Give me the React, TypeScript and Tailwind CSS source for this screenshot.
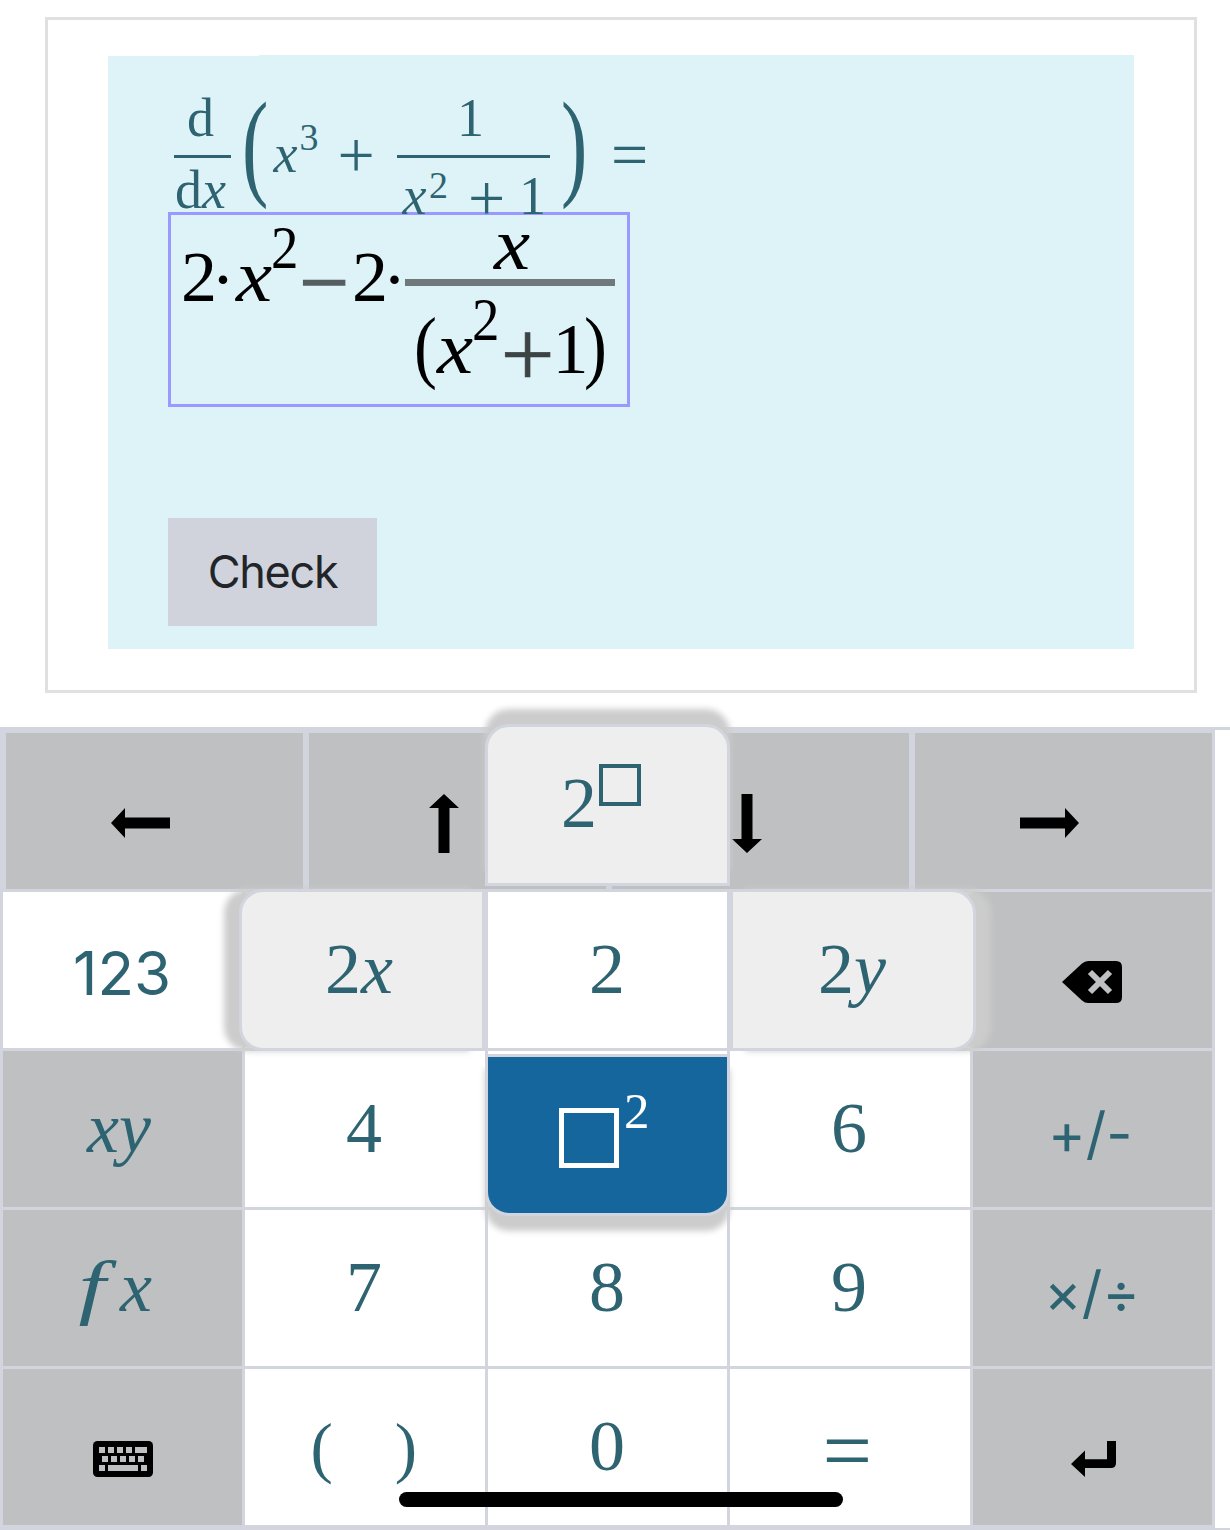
import type { ReactNode } from "react";

/** One math symbol; the line box is exactly one em high. */
function G({ c = "", children }: { c?: string; children: ReactNode }) {
  return <span className={`block shrink-0 whitespace-pre leading-none ${c}`}>{children}</span>;
}

function Question() {
  return (
    <div className="relative z-10 flex h-[122px] items-start text-[#2e6472]">
      <div className="w-[57px] shrink-0">
        <G c="pl-[13px] pt-[1px] text-[54px]">d</G>
        <div className="mt-[10px] h-[3px] bg-[#2e6472]" />
        <div className="mt-[5px] flex pl-[1px] text-[54px]">
          <G>d</G>
          <G c="italic">x</G>
        </div>
      </div>
      <G c="-mt-[4px] ml-[11px] w-[31.5px] origin-left scale-x-[0.67] text-[118px]">(</G>
      <G c="mt-[37px] w-[26px] text-[54px] italic">x</G>
      <G c="mt-[28px] w-[38px] text-[38px]">3</G>
      <G c="mt-[32px] w-[59px] text-[66px]">+</G>
      <div className="w-[153px] shrink-0">
        <G c="pl-[60.500px] pt-[1px] text-[54px]">1</G>
        <div className="mt-[10px] h-[3px] bg-[#2e6472]" />
        <div className="flex h-[60px] items-start pl-[6px]">
          <G c="mt-[11px] w-[26.500px] text-[54px] italic">x</G>
          <G c="mt-[8px] w-[39px] text-[38px]">2</G>
          <G c="mt-[7px] w-[51px] text-[66px]">+</G>
          <G c="mt-[11px] text-[54px]">1</G>
        </div>
      </div>
      <G c="-mt-[4px] ml-[11px] w-[50.500px] origin-left scale-x-[0.67] text-[118px]">)</G>
      <G c="mt-[32px] text-[66px]">=</G>
    </div>
  );
}

function Answer() {
  return (
    <div className="flex h-[195px] w-[462px] items-start border-[3px] border-[#9999ff] pl-[10px] text-black">
      <G c="mt-[26px] w-[30px] text-[72px]">2</G>
      <G c="mt-[29px] w-[25px] text-[72px]">·</G>
      <G c="mt-[24px] w-[35px] origin-left scale-x-110 text-[74px] italic">x</G>
      <G c="mt-[2px] w-[28.5px] origin-left scale-x-90 text-[61px]">2</G>
      <G c="mt-[24px] w-[52.500px] text-[88px] text-[#555e61] [-webkit-text-stroke:1.5px_#555e61]">−</G>
      <G c="mt-[26px] w-[30.5px] text-[72px]">2</G>
      <G c="mt-[29px] w-[22.5px] text-[72px]">·</G>
      <div className="w-[210px] shrink-0">
        <G c="-mt-[8px] h-[72px] pl-[89px] text-[74px] italic">
          <span className="inline-block origin-left scale-x-110">x</span>
        </G>
        <div className="h-[7px] bg-[#6f797c]" />
        <div className="flex items-start pl-[8.5px]">
          <G c="mt-[20px] w-[23.5px] origin-left scale-x-85 text-[81px]">(</G>
          <G c="mt-[25px] w-[35px] origin-left scale-x-110 text-[74px] italic">x</G>
          <G c="mt-[3px] w-[28.5px] origin-left scale-x-90 text-[61px]">2</G>
          <G c="mt-[20px] w-[52px] text-[96px] text-[#3c4345] [-webkit-text-stroke:0.7px_#3c4345]">+</G>
          <G c="mt-[27px] w-[31px] text-[72px]">1</G>
          <G c="mt-[20px] origin-left scale-x-85 text-[81px]">)</G>
        </div>
      </div>
    </div>
  );
}

function Arrow({ c = "" }: { c?: string }) {
  return (
    <svg className={`size-[60px] ${c}`} viewBox="0 0 60 60">
      <path d="M0 30 14 15V24.5H59V35.5H14V45Z" />
    </svg>
  );
}

function Backspace() {
  return (
    <svg className="ml-[89px] mt-[69px] h-[42px] w-[60px]" viewBox="0 0 60 42">
      <path d="M0 21 20 2.5Q23 0 26 0H54Q60 0 60 6V36Q60 42 54 42H26Q23 42 20 39.500Z" />
      <path d="M28 11 48 31M48 11 28 31" stroke="#bfc0c2" strokeWidth="6" />
    </svg>
  );
}

function KeyboardIcon() {
  return (
    <svg className="ml-[90px] mt-[72px] h-[36px] w-[60px]" viewBox="0 0 60 36">
      <rect width="60" height="36" rx="4.5" />
      <path
        fill="#bfc0c2"
        d="M6 6h6v6H6zM15 6h6v6h-6zM24 6h6v6h-6zM33 6h6v6h-6zM42 6h12v6H42zM9 15h6v6H9zM18 15h6v6h-6zM27 15h6v6h-6zM36 15h6v6h-6zM45 15h6v6h-6zM6 24h6v6H6zM15 24h30v6H15zM48 24h6v6h-6z"
      />
    </svg>
  );
}

function EnterIcon() {
  return (
    <svg className="ml-[98px] mt-[72px] h-[36px] w-[45px]" viewBox="0 0 45 36">
      <path d="M0 23 14 9.500V18.300H36V0H45V22Q45 27 40 27H14V36Z" />
    </svg>
  );
}

function Key({ c = "bg-white", children }: { c?: string; children: ReactNode }) {
  return <div className={`relative flex h-[156px] items-start ${c}`}>{children}</div>;
}

const gray = "bg-[#bfc0c2]";

export default function App() {
  return (
    <div className="relative h-[1530px] w-[1230px] overflow-hidden bg-white font-['Liberation_Serif',serif]">
      <div className="h-[727px] pl-[45px] pt-[17px]">
        <div className="h-[676px] w-[1152px] border-[3px] border-[#e0e0e0] pl-[60px] pt-[35px]">
          <div className="h-[594px] w-[1026px] bg-[#def3f8]">
            <div className="h-px w-[151px] bg-white" />
            <div className="pl-[60px] pt-[34px]">
              <div className="pl-[6px]">
                <Question />
              </div>
              <Answer />
              <button className="mt-[111px] flex h-[108px] w-[209px] items-center justify-center bg-[#d0d3db] font-[Inter,sans-serif] text-[45px] tracking-[-1.3px] text-[#212529]">
                Check
              </button>
            </div>
          </div>
        </div>
      </div>

      <div className="h-[803px] border-b-2 border-t-[3px] border-[#d2d5dd]">
        <div className="h-[798px] w-[1215px] bg-[#d2d5dd] pl-[3px] text-[72px] text-[#2e6472]">
          <div className="mb-[3px] flex gap-[6px] pl-[3px] pt-[3px] text-black">
            <div className={`h-[156px] w-[297px] pl-[105px] pt-[60px] ${gray}`}>
              <Arrow />
            </div>
            <div className={`h-[156px] w-[297px] pl-[105px] pt-[60.500px] ${gray}`}>
              <Arrow c="rotate-90" />
            </div>
            <div className={`h-[156px] w-[297px] pl-[105px] pt-[59.500px] ${gray}`}>
              <Arrow c="-rotate-90" />
            </div>
            <div className={`h-[156px] w-[297px] pl-[104px] pt-[60px] ${gray}`}>
              <Arrow c="rotate-180" />
            </div>
          </div>
          <div className="grid grid-cols-[239px_240px_239px_240px_239px] gap-[3px]">
            <Key>
              <G c="ml-[70px] mt-[51px] font-[Inter,sans-serif] text-[60px]">123</G>
            </Key>
            <Key>{null}</Key>
            <Key c="bg-white z-10">
              <G c="ml-[101px] mt-[41px]">2</G>
              <div className="absolute -left-[3px] -top-[168px] flex h-[162px] w-[245px] items-start rounded-t-[24px] border-[3px] border-[#d2d5dd] bg-[#eeeeee] shadow-[0_-15px_6px_#cccccc]">
                <G c="ml-[73px] mt-[40px]">2</G>
                <div className="ml-[2px] mt-[37px] size-[42px] border-4 border-[#2e6472]" />
              </div>
              <div className="absolute -left-[249px] -top-[3px] flex h-[162px] w-[246px] items-start rounded-l-[24px] border-[3px] border-[#d2d5dd] bg-[#eeeeee] shadow-[-15px_0_6px_#cccccc]">
                <G c="ml-[83px] mt-[41px]">
                  2<i>x</i>
                </G>
              </div>
              <div className="absolute -top-[3px] left-[242px] flex h-[162px] w-[246px] items-start rounded-r-[24px] border-[3px] border-[#d2d5dd] bg-[#eeeeee] shadow-[15px_0_6px_#cccccc]">
                <G c="ml-[85px] mt-[41px]">
                  2<i>y</i>
                </G>
              </div>
              <div className="absolute -left-[3px] top-[162px] flex h-[162px] w-[245px] items-start rounded-b-[24px] border-[3px] border-[#d2d5dd] bg-[#15669c] text-white shadow-[0_15px_6px_#cccccc]">
                <div className="ml-[71px] mt-[51px] size-[60px] border-[5px] border-white" />
                <G c="ml-[5px] mt-[29px] text-[51px]">2</G>
              </div>
            </Key>
            <Key>{null}</Key>
            <Key c={gray}>
              <Backspace />
            </Key>

            <Key c={gray}>
              <G c="ml-[84px] mt-[41px] italic">xy</G>
            </Key>
            <Key>
              <G c="ml-[101px] mt-[41px]">4</G>
            </Key>
            <Key>{null}</Key>
            <Key>
              <G c="ml-[101px] mt-[41px]">6</G>
            </Key>
            <Key c={gray}>
              <G c="ml-[75px] mt-[54px] font-[Inter,sans-serif] text-[57px]">+/-</G>
            </Key>

            <Key c={gray}>
              <G c="ml-[79px] mt-[41px] flex gap-[18px] italic">
                <span className="scale-x-135">f</span>
                <span>x</span>
              </G>
            </Key>
            <Key>
              <G c="ml-[101px] mt-[41px]">7</G>
            </Key>
            <Key>
              <G c="ml-[101px] mt-[41px]">8</G>
            </Key>
            <Key>
              <G c="ml-[101px] mt-[41px]">9</G>
            </Key>
            <Key c={gray}>
              <G c="ml-[71px] mt-[54px] font-[Inter,sans-serif] text-[57px]">×/÷</G>
            </Key>

            <Key c={gray}>
              <KeyboardIcon />
            </Key>
            <Key>
              <div className="ml-[65.5px] mt-[45px] flex gap-[62px] text-[67px]">
                <G>(</G>
                <G>)</G>
              </div>
            </Key>
            <Key>
              <G c="ml-[101px] mt-[41px]">0</G>
            </Key>
            <Key>
              <G c="ml-[92.500px] mt-[38px] text-[88px]">=</G>
            </Key>
            <Key c={gray}>
              <EnterIcon />
            </Key>
          </div>
        </div>
      </div>
      <div className="absolute left-[399px] top-[1492px] z-20 h-[15px] w-[444px] rounded-full bg-black" />
    </div>
  );
}
